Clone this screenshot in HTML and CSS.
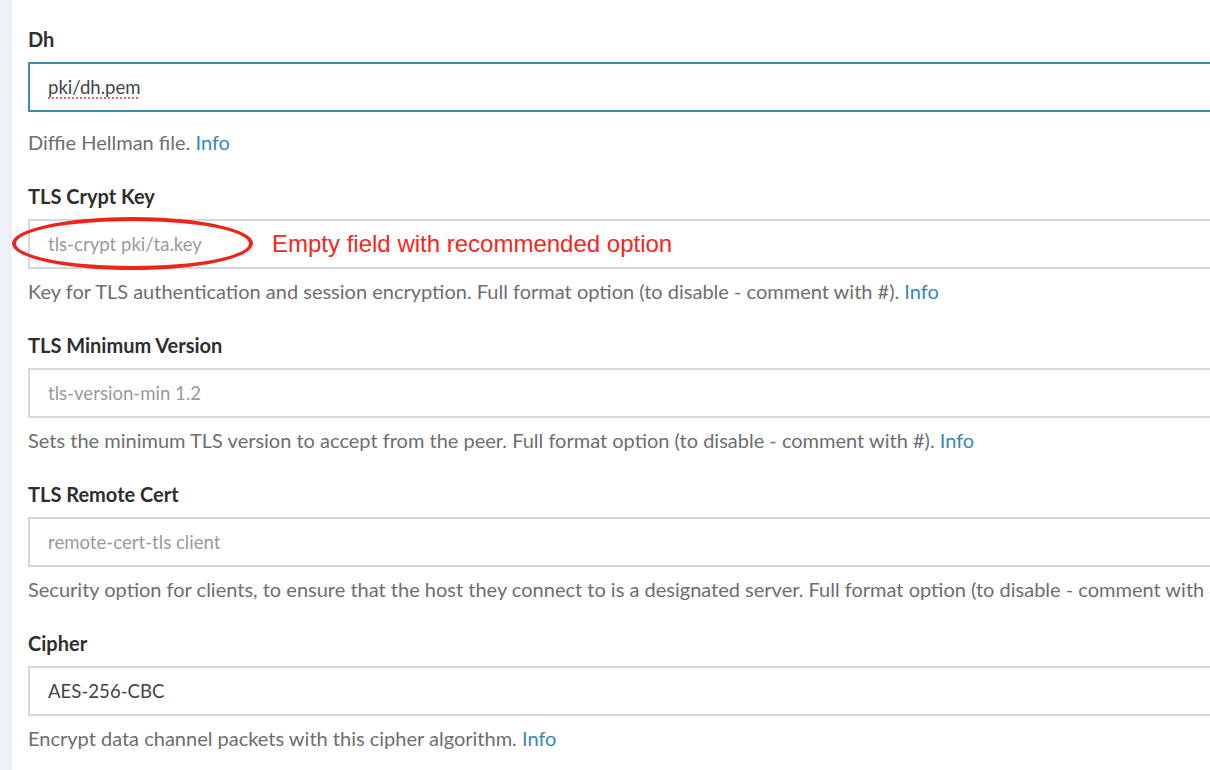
FILE: index.html
```html
<!DOCTYPE html>
<html>
<head>
<meta charset="utf-8">
<link rel="stylesheet" href="styles.css">
</head>
<body>
<div class="page">
  <div class="sidebar"></div>
  <div class="content">
    <div class="group">
      <label class="label">Dh</label>
      <div class="field focused"><span class="value spell">pki/dh.pem</span></div>
      <p class="help help-wide">Diffie Hellman file. <a class="info">Info</a></p>
    </div>
    <div class="group">
      <label class="label">TLS Crypt Key</label>
      <div class="field"><span class="placeholder">tls-crypt pki/ta.key</span></div>
      <p class="help">Key for TLS authentication and session encryption. Full format option (to disable - comment with #). <a class="info">Info</a></p>
      <div class="oval"></div>
      <div class="note">Empty field with recommended option</div>
    </div>
    <div class="group">
      <label class="label">TLS Minimum Version</label>
      <div class="field"><span class="placeholder">tls-version-min 1.2</span></div>
      <p class="help">Sets the minimum TLS version to accept from the peer. Full format option (to disable - comment with #). <a class="info">Info</a></p>
    </div>
    <div class="group">
      <label class="label">TLS Remote Cert</label>
      <div class="field"><span class="placeholder">remote-cert-tls client</span></div>
      <p class="help">Security option for clients, to ensure that the host they connect to is a designated server. Full format option (to disable - comment with #). <a class="info">Info</a></p>
    </div>
    <div class="group">
      <label class="label">Cipher</label>
      <div class="field"><span class="value">AES-256-CBC</span></div>
      <p class="help">Encrypt data channel packets with this cipher algorithm. <a class="info">Info</a></p>
    </div>
  </div>
</div>
</body>
</html>
```

FILE: styles.css
```css
html, body {
  margin: 0;
  padding: 0;
  background: #ffffff;
  font-family: Lato, "Open Sans", sans-serif;
}

.page {
  display: flex;
  width: 1210px;
  height: 770px;
  overflow: hidden;
}

.sidebar {
  width: 12px;
  flex: none;
  background: #edf0f7;
}

.content {
  flex: 1;
  padding: 27px 0 0 16px;
  overflow: hidden;
}

.group {
  position: relative;
  width: 1200px;
}

.label {
  display: block;
  font-weight: 700;
  font-size: 20px;
  line-height: 24px;
  color: #2e2e2e;
  margin: 0 0 11px;
}

.field {
  box-sizing: border-box;
  height: 50px;
  border: 2px solid #d4d7e0;
  padding: 0 18px;
  display: flex;
  align-items: center;
  font-size: 18.6px;
}

.field.focused {
  border-color: #3c8dbc;
}

.value {
  color: #444;
}

.spell {
  text-decoration: underline dotted #e05a5a;
  text-underline-offset: 4px;
}

.placeholder {
  color: #9a9a9a;
}

.help {
  margin: 10px 0 30px;
  font-size: 20px;
  line-height: 24px;
  color: #6e6e6e;
  white-space: nowrap;
}

.help-wide {
  margin-top: 18px;
}

.info {
  color: #3a87b8;
}

.oval {
  position: absolute;
  left: -16px;
  top: 33px;
  width: 241px;
  height: 53px;
  box-sizing: border-box;
  border: 4px solid #ee2419;
  border-radius: 50%;
}

.note {
  position: absolute;
  left: 244px;
  top: 46px;
  font-family: "Liberation Sans", Arial, sans-serif;
  font-size: 24px;
  line-height: 28px;
  color: #f0281e;
}
```
